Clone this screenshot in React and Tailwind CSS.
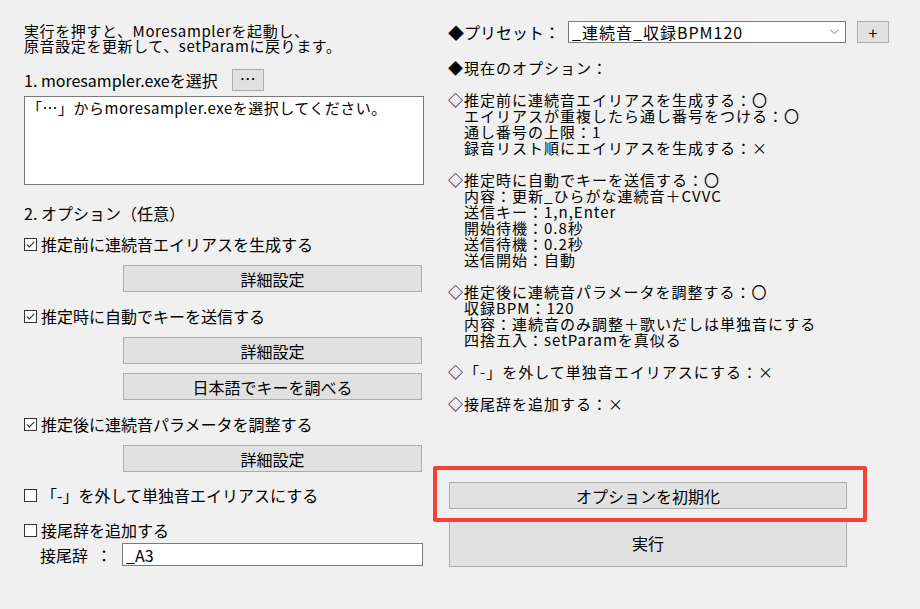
import React from 'react';

const font = { fontFamily: '"Noto Sans CJK JP", "Noto Sans", sans-serif' };

function CheckBox({ checked }) {
  return (
    <svg width="13" height="13" viewBox="0 0 13 13" className="shrink-0">
      <rect x="0.5" y="0.5" width="12" height="12" fill="#ffffff" stroke="#333333" />
      {checked && <path d="M2.8 6.4 L5.3 9 L10.2 3.9" fill="none" stroke="#333333" strokeWidth="1.1" />}
    </svg>
  );
}

function Check({ checked, label, className = '' }) {
  return (
    <div className={`flex items-center h-4 ${className}`}>
      <CheckBox checked={checked} />
      <span className="ml-[4px] leading-4 whitespace-pre">{label}</span>
    </div>
  );
}

function WinButton({ children, className = '' }) {
  return (
    <button className={`flex items-center justify-center bg-[#e1e1e1] border border-[#adadad] text-black text-[16px] leading-4 ${className}`}>
      {children}
    </button>
  );
}

const optionsText = [
  '◆現在のオプション：',
  '',
  '◇推定前に連続音エイリアスを生成する：〇',
  '　エイリアスが重複したら通し番号をつける：〇',
  '　通し番号の上限：1',
  '　録音リスト順にエイリアスを生成する：×',
  '',
  '◇推定時に自動でキーを送信する：〇',
  '　内容：更新_ひらがな連続音＋CVVC',
  '　送信キー：1,n,Enter',
  '　開始待機：0.8秒',
  '　送信待機：0.2秒',
  '　送信開始：自動',
  '',
  '◇推定後に連続音パラメータを調整する：〇',
  '　収録BPM：120',
  '　内容：連続音のみ調整＋歌いだしは単独音にする',
  '　四捨五入：setParamを真似る',
  '',
  '◇「-」を外して単独音エイリアスにする：×',
  '',
  '◇接尾辞を追加する：×',
];

export default function App() {
  return (
    <div className="relative w-[920px] h-[609px] bg-[#f0f0f0] text-black text-[16px] overflow-hidden" style={font}>
      <div className="flex">
        {/* left column */}
        <div className="ml-[24px] w-[400px] flex flex-col">
          <div className="mt-[23px] leading-[15px] whitespace-pre text-[15px] tracking-[0.6px]">
            {'実行を押すと、Moresamplerを起動し、\n原音設定を更新して、setParamに戻ります。'}
          </div>

          <div className="mt-[16px] h-[22px] flex items-center">
            <span className="leading-4">1. moresampler.exeを選択</span>
            <WinButton className="ml-[14px] w-[32px] h-[22px] pb-[4px]">…</WinButton>
          </div>

          <div className="mt-[5px] h-[89px] bg-white border border-[#7a7a7a] px-[2px] pt-[3px] leading-4 text-[15px] tracking-[0.5px]">
            「…」からmoresampler.exeを選択してください。
          </div>

          <div className="mt-[20px] h-4 leading-4">2. オプション（任意）</div>

          <Check checked label="推定前に連続音エイリアスを生成する" className="mt-[15px]" />
          <WinButton className="mt-[13px] ml-[99px] w-[299px] h-[27px]">詳細設定</WinButton>

          <Check checked label="推定時に自動でキーを送信する" className="mt-[16px]" />
          <WinButton className="mt-[13px] ml-[99px] w-[299px] h-[27px]">詳細設定</WinButton>
          <WinButton className="mt-[9px] ml-[99px] w-[299px] h-[27px]">日本語でキーを調べる</WinButton>

          <Check checked label="推定後に連続音パラメータを調整する" className="mt-[16px]" />
          <WinButton className="mt-[13px] ml-[99px] w-[299px] h-[27px]">詳細設定</WinButton>

          <Check label="「-」を外して単独音エイリアスにする" className="mt-[15px]" />
          <Check label="接尾辞を追加する" className="mt-[19px]" />

          <div className="mt-[5px] h-[23px] flex items-center">
            <span className="ml-[16px] leading-4">接尾辞</span>
            <span className="ml-[8px] w-[26px] leading-4">：</span>
            <div className="w-[301px] h-[23px] bg-white border border-[#7a7a7a] flex items-center px-[3px] leading-4">_A3</div>
          </div>
        </div>

        {/* right column */}
        <div className="ml-[24px] w-[442px] flex flex-col">
          <div className="mt-[21px] h-[22px] flex items-center">
            <span className="w-[120px] leading-4">◆プリセット：</span>
            <div className="w-[278px] h-[22px] bg-white border border-[#7a7a7a] flex items-center pl-[3px] pr-[6px]">
              <span className="flex-1 leading-4 tracking-[1px]">_連続音_収録BPM120</span>
              <svg width="9" height="6" viewBox="0 0 9 6">
                <path d="M0.5 0.8 L4.5 4.8 L8.5 0.8" fill="none" stroke="#777777" strokeWidth="1" />
              </svg>
            </div>
            <WinButton className="ml-[11px] w-[32px] h-[22px]">+</WinButton>
          </div>

          <div className="mt-[17px] leading-4 whitespace-pre text-[15px] tracking-[1px]">
            {optionsText.map((line, i) => (
              <div key={i} className="h-4">{line}</div>
            ))}
          </div>

          <WinButton className="mt-[70px] ml-[1px] w-[398px] h-[27px]">オプションを初期化</WinButton>
          <WinButton className="mt-[9px] ml-[1px] w-[398px] h-[49px]">実行</WinButton>
        </div>
      </div>

      {/* highlight annotation */}
      <div className="absolute left-[433px] top-[466px] w-[434px] h-[56px] border-4 border-[#f44336] rounded-[2px] pointer-events-none" />
    </div>
  );
}
